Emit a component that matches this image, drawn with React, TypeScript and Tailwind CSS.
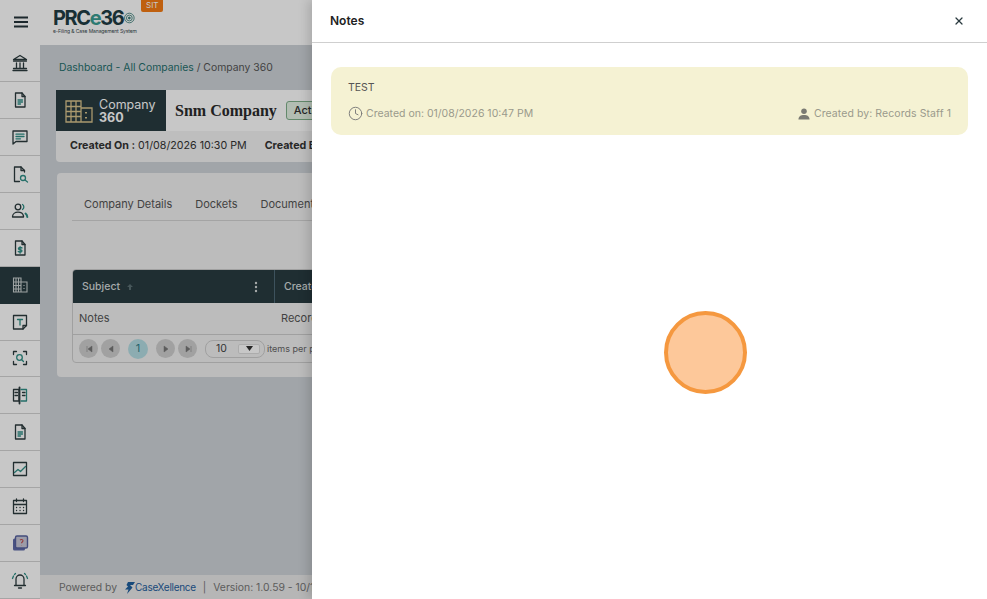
import React from "react";
import { Clock, X } from "lucide-react";

const dark = "#2c3b3e";
const teal = "#2f8f86";

const Svg = ({ children }: { children: React.ReactNode }) => (
  <svg width="20" height="20" viewBox="0 0 20 20" fill="none" stroke={dark} strokeWidth="1.3" strokeLinecap="round" strokeLinejoin="round">
    {children}
  </svg>
);

const FileBase = ({ children }: { children?: React.ReactNode }) => (
  <Svg>
    <path d="M5.500 3h6.500l3 3.500v10.500h-9.500z" />
    <path d="M12 3v3.500h3" />
    {children}
  </Svg>
);

const icons: React.ReactNode[] = [
  <Svg key="bank">
    <path d="M10 2.500 3.500 6.500h13z" />
    <path d="M3.500 8h13M6.500 10v4.500M10 10v4.500M13.500 10v4.500M3.500 15.500h13M3 17.500h14" />
  </Svg>,
  <FileBase key="doc">
    <path d="M8 10h4.500M8 12h4.500M8 14h2.500" stroke={teal} />
  </FileBase>,
  <Svg key="chat">
    <path d="M3 4h14v10.500H6l-3 2.500z" />
    <path d="M6 7.200h8M6 9.500h8M6 11.800h4.500" stroke={teal} />
  </Svg>,
  <Svg key="search">
    <path d="M14.500 8V6.500L11 3H4.500v14.500h5" />
    <path d="M11 3v3.500h3.500" />
    <circle cx="13" cy="14" r="2.500" stroke={teal} />
    <path d="m15 16 2.500 2" stroke={teal} />
  </Svg>,
  <Svg key="users">
    <circle cx="8" cy="6" r="2.800" />
    <path d="M2.500 16c0-3 2.500-4.800 5.500-4.800s5 1.500 5.500 3.800v1z" />
    <path d="M12.500 3.500a3 3 0 0 1 0 5" stroke={teal} />
    <path d="M15.500 12.500c1 .8 1.700 2 1.800 3.500" stroke={teal} strokeWidth="2" />
  </Svg>,
  <FileBase key="dollar">
    <path d="M12 10c-.5-.7-3.400-.9-3.600.5-.2 1.800 3.800.7 3.600 2.500-.2 1.400-3.100 1.300-3.800.4M10.100 8.700v6.500" stroke={teal} />
  </FileBase>,
  <svg key="office" width="20" height="20" viewBox="0 0 20 20" fill="none" stroke="#c9d0d0" strokeWidth="1.100">
    <path d="M3.500 17V3h7.500v14zM11 7h6v10H3.500M3.500 7H11M3.500 10.500H11M3.500 14H11M6 3v14M8.500 3v14" />
    <path d="M14 10v.7M14 13v.7" strokeWidth="1.500" />
  </svg>,
  <Svg key="note">
    <path d="M3.500 3.500h13v10L13 17H3.500z" />
    <path d="M13 17v-3.500h3.500" />
    <path d="M7.500 7.500h5M10 7.500V13" stroke={teal} />
  </Svg>,
  <Svg key="scan">
    <path d="M3.500 6.500v-3h3M13.500 3.500h3v3M16.500 13.500v3h-3M6.500 16.500h-3v-3" />
    <circle cx="9.500" cy="9.500" r="2.800" stroke={teal} />
    <path d="m11.700 11.700 1.800 1.800" stroke={teal} />
  </Svg>,
  <Svg key="book">
    <path d="M9 4.500H3.500V16H9z" />
    <path d="M9.500 2.500v16" strokeWidth="1.800" />
    <path d="M11 4.500h5.500V16H11" stroke={teal} />
    <path d="M5 7.500h2.500M5 10.500h2.500M12.500 7.500H15M12.500 10.500H15" />
  </Svg>,
  <FileBase key="doc2">
    <path d="M8 10h4.500M8 12h4.500M8 14h2.500" stroke={teal} />
  </FileBase>,
  <Svg key="chart">
    <path d="M3.500 3.500h13v13h-13z" />
    <path d="m4.500 13.500 3.500-3 2.500 2 5-5" stroke={teal} />
  </Svg>,
  <Svg key="cal">
    <path d="M3.500 4.500h13v13h-13zM3.500 8.500h13M6.500 3v2.500M13.500 3v2.500" />
    <path d="M6.500 11.500h.1M10 11.500h.1M13.500 11.500h.1M6.500 14.500h.1M10 14.500h.1M13.500 14.500h.1" />
  </Svg>,
  <svg key="help" width="20" height="20" viewBox="0 0 20 20" fill="none">
    <rect x="3" y="5.500" width="12" height="12" rx="1.500" fill="#5f6aa8" />
    <rect x="5.500" y="3" width="12" height="12" rx="1.500" fill="#c8c8d8" stroke="#56619f" strokeWidth="1.400" />
    <path d="M10 7c1-1 3-.6 3 .8 0 1.200-1.500 1.200-1.500 2.500M11.500 12.300v.2" stroke="#c2504f" strokeWidth="1.100" />
  </svg>,
  <Svg key="bell">
    <path d="M6 15.500V9a4 4 0 0 1 8 0v6.500zM4.500 15.500h11M8.500 18h3" />
    <path d="M3.500 6 2.500 8.500M16.500 6l1 2.500M5.500 3.500 4.500 4.500M14.500 3.500l1 1" stroke={teal} />
  </Svg>,
];

const Pager = ({ d, className = "" }: { d: string; className?: string }) => (
  <span className={"flex h-[19px] w-[19px] items-center justify-center rounded-full bg-[#cfcfcf] " + className}>
    <svg width="8" height="8" viewBox="0 0 8 8" fill="#777" stroke="#777" strokeWidth="0.500">
      <path d={d} />
    </svg>
  </span>
);

const App = () => {
  return (
    <div className="relative h-[599px] w-[987px] overflow-hidden bg-[#cfd4d9] font-['Inter','Liberation_Sans',sans-serif] text-[#333]">
      {/* page behind the drawer */}
      <header className="flex h-[45px] bg-white">
        <div className="flex w-[41px] items-center justify-center pb-[1px]">
          <svg width="16" height="12" viewBox="0 0 16 12" fill="none" stroke="#24343a" strokeWidth="2">
            <path d="M1 1.500h14M1 6h14M1 10.500h14" />
          </svg>
        </div>
        <div className="ml-[12px] flex w-[82px] flex-col pt-[8px]">
          <div className="flex h-[20px] items-center">
            <div className="text-[20px] leading-[20px] font-bold tracking-[-1.400px] text-[#1f3d45]">
              PRC<span className="text-[#3a9d93]">e</span>36
            </div>
            <svg width="14" height="16" viewBox="0 0 14 16" fill="none" stroke="#3a7d78" strokeWidth="1.100" className="ml-[1px]">
              <circle cx="7" cy="8" r="6.300" />
              <circle cx="7" cy="8" r="3.800" />
              <circle cx="7" cy="8" r="1.300" fill="#3a7d78" />
            </svg>
          </div>
          <div className="whitespace-nowrap text-[5px] leading-[6px] tracking-[-0.100px] text-[#36484c]">e-Filing &amp; Case Management System</div>
        </div>
        <div className="ml-[6px] h-[12px] rounded-b-[2px] bg-[#f57c14] px-[5px] text-[8px] leading-[10px] text-white">SIT</div>
      </header>

      <div className="flex h-[554px]">
        <nav className="flex w-[40px] shrink-0 flex-col bg-white">
          {icons.map((icon, i) => (
            <div
              key={i}
              className={
                i === 6
                  ? "flex h-[37px] items-center justify-center bg-[#283c41]"
                  : "flex h-[37px] items-center justify-center border-b border-[#d4d4d4]"
              }
            >
              {icon}
            </div>
          ))}
        </nav>

        <main className="flex min-w-0 flex-1 flex-col">
          <div className="flex-1 px-[16px] pt-[16px]">
            <div className="pl-[3px] text-[10.400px] leading-[14px] text-[#555]">
              <span className="text-[#1f6f6c]">Dashboard - All Companies</span> / Company 360
            </div>

            <div className="mt-[15px] flex h-[41px] items-center bg-white">
              <div className="flex h-full w-[110px] items-center bg-[#283c41] pl-[9px]">
                <svg width="28" height="24" viewBox="0 0 28 24" fill="none" stroke="#d9c48d" strokeWidth="1.300">
                  <path d="M1 23V2h15v21zM16 9h11v14H1M1 7.500h15M1 12.500h15M1 17.500h15M6 2v21M11 2v21" />
                  <path d="M21 13v1.500M21 18v1.500" strokeWidth="2" />
                </svg>
                <div className="ml-[6px] pt-[1px] text-[12.500px] text-white">
                  <div className="h-[13px] leading-[13px]">Company</div>
                  <div className="h-[13px] leading-[13px] font-bold">360</div>
                </div>
              </div>
              <span className="ml-[9px] font-['Liberation_Serif',serif] text-[16px] font-bold text-[#2b2b2b]">Snm Company</span>
              <span className="ml-[9px] rounded-[3px] border border-[#7fb08a] bg-[#e4f2e5] px-[7px] text-[11px] leading-[17px] font-medium text-[#333]">Active</span>
            </div>
            <div className="flex h-[31px] items-center gap-[18px] rounded-b-[4px] bg-[#f4f4f4] pl-[14px] text-[10.700px] text-[#333]">
              <span>
                <b>Created On :</b> 01/08/2026 10:30 PM
              </span>
              <b>Created By :</b>
            </div>

            <section className="mt-[11px] ml-[1px] h-[204px] rounded-[4px] bg-[#f1f1f1] px-[15px] pt-[21px]">
              <div className="flex h-[27px] gap-[23px] border-b border-[#d2d2d2] pl-[12px] text-[11px] leading-[20px] text-[#555]">
                <span>Company Details</span>
                <span>Dockets</span>
                <span>Documents</span>
              </div>
              <div className="mt-[48px] overflow-hidden rounded-[4px] border border-[#cdcdcd]">
                <div className="flex h-[33px] items-center bg-[#283c41] text-[10.500px] font-medium text-[#d4dada]">
                  <div className="flex h-full w-[202px] items-center border-r border-[#4f6a78] pl-[9px]">
                    <span>Subject</span>
                    <svg width="8" height="8" viewBox="0 0 8 8" fill="#5c7074" className="ml-[6px]">
                      <path d="M4 1 7 4H5v3H3V4H1z" />
                    </svg>
                    <svg width="4" height="12" viewBox="0 0 4 12" fill="#d4dada" className="ml-[120px]">
                      <circle cx="2" cy="2" r="1.200" />
                      <circle cx="2" cy="6" r="1.200" />
                      <circle cx="2" cy="10" r="1.200" />
                    </svg>
                  </div>
                  <span className="pl-[9px]">Created By</span>
                </div>
                <div className="flex h-[32px] items-center border-b border-[#cdcdcd] text-[11px] text-[#555]">
                  <span className="w-[208px] pl-[6px]">Notes</span>
                  <span>Records Staff 1</span>
                </div>
                <div className="flex h-[27px] items-center pl-[6px] text-[9px] text-[#666]">
                  <Pager d="M2 1v6M7 1 3 4l4 3z" />
                  <Pager d="M6 1 2 4l4 3z" className="ml-[3px]" />
                  <span className="ml-[8px] flex h-[20px] w-[20px] items-center justify-center rounded-full bg-[#b4dde3] text-[11px] text-[#2f7f8a]">1</span>
                  <Pager d="m2 1 4 3-4 3z" className="ml-[8px]" />
                  <Pager d="M7 1v6M2 1l4 3-4 3z" className="ml-[3px]" />
                  <div className="ml-[8px] flex h-[18px] w-[60px] items-center justify-between rounded-[8px] border border-[#cdcdcd] pr-[4px] pl-[10px] text-[10.500px] text-[#444]">
                    10
                    <span className="flex h-[10px] w-[22px] items-center justify-center rounded-[2px] border border-[#ddd] bg-white">
                      <svg width="7" height="5" viewBox="0 0 7 5" fill="#333">
                        <path d="M0 0h7L3.500 5z" />
                      </svg>
                    </span>
                  </div>
                  <span className="ml-[2px] whitespace-nowrap">items per page</span>
                </div>
              </div>
            </section>
          </div>

          <footer className="flex h-[24px] items-center whitespace-nowrap bg-[#e9e9e9] pt-[1px] pl-[19px] text-[10.400px] text-[#777]">
            Powered by
            <svg width="10" height="12" viewBox="0 0 10 12" fill="#1f5f9e" className="ml-[8px]">
              <path d="M3 0h7L8 3H5l2.500 2.500L2 12l1.500-4.500H0l3-3L1.500 3z" />
            </svg>
            <span className="text-[10px] tracking-[-0.300px] text-[#1f5f9e]">CaseXellence</span>
            <span className="ml-[7px]">|</span>
            <span className="ml-[7px]">Version: 1.0.59 - 10/17/2025</span>
          </footer>
        </main>
      </div>

      {/* backdrop */}
      <div className="absolute inset-0 bg-black/[0.22]"></div>

      {/* notes drawer */}
      <aside className="absolute top-0 right-0 bottom-0 w-[675px] bg-white shadow-[-4px_0_10px_rgba(0,0,0,0.15)]">
        <div className="flex h-[43px] items-center justify-between border-b border-[#cfcfcf] pr-[22px] pl-[18px]">
          <h2 className="text-[12px] font-semibold text-[#222]">Notes</h2>
          <X size={12} strokeWidth={2.500} color="#2a3a3f" />
        </div>
        <div className="px-[19px] pt-[24px]">
          <div className="h-[68px] rounded-[10px] bg-[#f5f2d3] px-[17px] pt-[14px]">
            <div className="text-[10.500px] leading-[14px] text-[#555]">TEST</div>
            <div className="mt-[11px] flex items-center justify-between text-[10.500px] leading-[14px] text-[#9a9a8c]">
              <span className="flex items-center gap-[3px]">
                <Clock size={15} strokeWidth={1.500} color="#777" />
                Created on: 01/08/2026 10:47 PM
              </span>
              <span className="flex items-center gap-[4px] tracking-[0.080px]">
                <svg width="12" height="12" viewBox="0 0 13 13" fill="#7a7a72">
                  <circle cx="6.500" cy="3.500" r="3" />
                  <path d="M0.500 12.500c0-3.500 2.500-5 6-5s6 1.500 6 5z" />
                </svg>
                Created by: Records Staff 1
              </span>
            </div>
          </div>
        </div>
      </aside>

      {/* click marker */}
      <div className="absolute top-[311px] left-[664px] h-[83px] w-[83px] rounded-full border-[4px] border-[#f5983f] bg-[#fdc89a]"></div>
    </div>
  );
};

export default App;
